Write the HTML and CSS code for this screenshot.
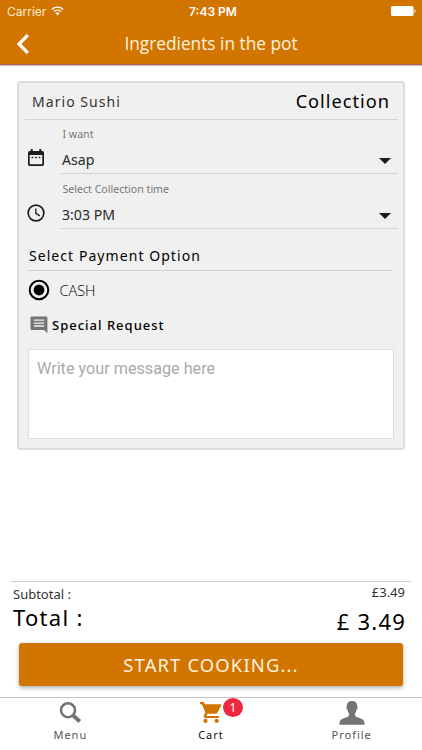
FILE: index.html
```html
<!DOCTYPE html>
<html lang="en">
<head>
<meta charset="utf-8">
<title>Ingredients in the pot</title>
<link rel="stylesheet" href="styles.css">
</head>
<body>
<div class="app">
  <header class="header">
    <div class="status">
      <div class="carrier"><span>Carrier</span>
        <svg class="wifi" width="13" height="10" viewBox="0 0 13 10" fill="none" stroke="#fff" stroke-width="1.4"><path d="M.8 3.4a8.3 8.3 0 0 1 11.4 0M2.8 5.6a5.4 5.4 0 0 1 7.4 0"/><path d="M4.4 7.1a3.2 3.2 0 0 1 4.2 0L6.5 9.4z" fill="#fff" stroke="none"/></svg>
      </div>
      <div class="clock">7:43 PM</div>
      <svg class="battery" width="25" height="10" viewBox="0 0 25 10" fill="#fff"><rect width="22.5" height="10" rx="1.6"/><path d="M23.3 3.2c1.6.4 1.6 3.2 0 3.6z"/></svg>
    </div>
    <div class="navbar">
      <svg class="back" width="14" height="20" viewBox="0 0 14 20" fill="none" stroke="#fff" stroke-width="3.2"><path d="M11.8 1.2 3 10l8.800 8.800"/></svg>
      <h1 class="title">Ingredients in the pot</h1>
    </div>
  </header>

  <main class="content">
    <section class="card">
      <div class="card-head"><span class="shop">Mario Sushi</span><span class="mode">Collection</span></div>
      <div class="field">
        <svg class="field-icon" width="20" height="20" viewBox="0 0 20 20" fill="#1c1c1c"><path d="M16.300 3h-1V1h-2v2H6.700V1h-2v2h-1A1.800 1.800 0 0 0 2 4.800v11.400A1.800 1.800 0 0 0 3.800 18h12.400a1.800 1.800 0 0 0 1.800-1.800V4.800A1.800 1.800 0 0 0 16.300 3zm0 13.300H3.700V7h12.600z"/><path d="M5.500 8.700h1.700v1.500H5.500zm3.600 0h1.700v1.500H9.100zm3.600 0h1.700v1.500h-1.700z"/></svg>
        <div class="select"><span class="label">I want</span><div class="value"><span>Asap</span><i class="caret"></i></div></div>
      </div>
      <div class="field second">
        <svg class="field-icon" width="20" height="20" viewBox="0 0 24 24" fill="none" stroke="#1c1c1c" stroke-width="2"><circle cx="12" cy="12" r="9.4"/><path d="M11.800 6.500v6l4.800 2.900" stroke-width="1.600"/></svg>
        <div class="select"><span class="label">Select Collection time</span><div class="value"><span>3:03 PM</span><i class="caret"></i></div></div>
      </div>
      <h2 class="payment">Select Payment Option</h2>
      <div class="option">
        <svg width="22" height="22" viewBox="0 0 22 22"><circle cx="11" cy="11" r="9.300" fill="none" stroke="#000" stroke-width="2"/><circle cx="11" cy="11" r="5.400"/></svg>
        <span class="cash">CASH</span>
      </div>
      <div class="request">
        <svg width="18" height="18" viewBox="0 0 18 18"><path d="M1.800.5h14.300a1.300 1.300 0 0 1 1.300 1.300v15.400L14 14H1.800A1.300 1.300 0 0 1 .5 12.700V1.800A1.300 1.300 0 0 1 1.800.5z" fill="#757575"/><path d="M3.800 4.200h10.400M3.800 7.100h10.400M3.800 10h10.400" stroke="#f0f0f0" stroke-width="1.300"/></svg>
        <span class="special">Special Request</span>
      </div>
      <textarea class="message" placeholder="Write your message here"></textarea>
    </section>
  </main>

  <section class="summary">
    <div class="totals">
      <div class="names"><div class="subtotal"><span>Subtotal :</span></div><div class="total"><span>Total :</span></div></div>
      <div class="amounts"><div class="sub-amount"><span>£3.49</span></div><div class="total-amount"><span>£ 3.49</span></div></div>
    </div>
    <button class="start"><span>START COOKING...</span></button>
  </section>

  <nav class="tabs">
    <div class="tab">
      <svg class="tab-icon" width="26" height="26" viewBox="0 0 26 26" fill="none" stroke="#757575"><circle cx="11" cy="10.200" r="7" stroke-width="2.600"/><path d="m16.200 15.500 6.600 6" stroke-width="4"/></svg>
      <span class="tab-label">Menu</span>
    </div>
    <div class="tab active">
      <div class="cart">
        <svg class="tab-icon" width="26" height="26" viewBox="0 0 26 26" fill="#d27500"><path d="M2 2h3.900l1 2.200h15.500c.8 0 1.200.7.800 1.400l-3.900 7.100c-.4.700-1 1-1.800 1H9.600l-1 1.800c-.1.300 0 .5.300.5h12v2.100H7.700c-1.800 0-2.500-1.600-1.700-3l1.400-2.500L3.800 4.200H2z"/><circle cx="7.500" cy="20.900" r="2.100"/><circle cx="18.700" cy="20.900" r="2.100"/></svg>
        <span class="badge">1</span>
      </div>
      <span class="tab-label">Cart</span>
    </div>
    <div class="tab">
      <svg class="tab-icon" width="26" height="26" viewBox="0 0 26 26" fill="#757575"><path d="M13 1c3.500 0 5.200 1.900 5.100 5.100.8.300.7 2.700-.3 3.100-.3 1.900-.9 3-1.700 3.900v2.500c.5 1.300 2.100 1.700 4.500 2.500 3.400 1.200 4.900 2.200 5 6.700H.4c.1-4.500 1.600-5.500 5-6.700 2.400-.8 4-1.200 4.500-2.500v-2.500c-.8-.9-1.400-2-1.700-3.900-1-.4-1.100-2.800-.3-3.100C7.800 2.900 9.500 1 13 1z"/></svg>
      <span class="tab-label">Profile</span>
    </div>
  </nav>
</div>
</body>
</html>
```
FILE: styles.css
```css
* { box-sizing: border-box; }
body { margin: 0; background: #fff; color: #222; font-family: "Noto Sans", "Open Sans", sans-serif; }
h1, h2 { margin: 0; font-weight: 400; }
svg { display: block; flex: none; }
.app { width: 422px; height: 750px; display: flex; flex-direction: column; overflow: hidden; }

.header { height: 66px; flex: none; background: #d27500; border-bottom: 1px solid #d6b3b5; box-shadow: inset 0 -1px #a06a5c; color: #fff; }
.status { height: 22px; padding: 0 6px 0 7px; display: grid; grid-template-columns: 1fr auto 1fr; align-items: center; font-family: Inter, sans-serif; font-size: 12px; }
.carrier { display: flex; align-items: center; gap: 5px; color: #ffebcf; }
.clock { font-weight: 600; font-size: 12px; padding-left: 3px; }
.battery { justify-self: end; }
.navbar { height: 43px; padding: 0 16px; display: grid; grid-template-columns: 40px 1fr 40px; align-items: center; }
.title { text-align: center; font: 400 17.300px/24px "Open Sans", sans-serif; color: #fff2df; white-space: nowrap; }

.content { flex: 1; padding: 15px 17px 0; }
.card { height: 369px; background: #f0f0f0; border: 2px solid #ddd; border-radius: 3px; padding: 0 5px 0 6px; }
.card-head { height: 37px; padding: 0 8px 0 7px; display: flex; align-items: center; justify-content: space-between; border-bottom: 1px solid #d4d4d4; }
.shop { font-size: 14px; letter-spacing: 1.050px; color: #333; }
.mode { font-size: 18.200px; letter-spacing: 1px; color: #000; }
.field { height: 54px; display: flex; }
.second { height: 55px; }
.field-icon { margin: 28px 14px 0 1px; }
.second .field-icon { margin-top: 29px; }
.select { flex: 1; border-bottom: 1px solid #d4d4d4; padding: 6px 7px 0 2px; }
.second .select { padding-top: 7px; }
.label { display: block; font-size: 10.600px; line-height: 16px; color: #777; padding-left: .5px; }
.value { display: flex; justify-content: space-between; align-items: center; font-size: 14.100px; line-height: 20px; margin-top: 8px; color: #2a2a2a; }
.caret { border: 6px solid transparent; border-top: 6px solid #1c1c1c; border-bottom: 0; position: relative; top: 1px; }
.payment { height: 42px; margin: 0 5px 0 3px; padding: 17px 0 0 1px; border-bottom: 1px solid #d0d0d0; font-size: 14px; line-height: 20px; letter-spacing: 1.060px; color: #000; }
.option { height: 38px; padding-left: 3px; display: flex; align-items: center; gap: 9px; }
.cash { font: 300 14.500px/20px "Open Sans", sans-serif; color: #000; padding: 1px 0 0 .5px; }
.request { height: 32px; padding-left: 5px; display: flex; align-items: center; gap: 4px; }
.special { font-size: 13px; letter-spacing: 1px; color: #000; font-weight: 500; }
.message { display: block; width: 366px; height: 90px; margin: 8px 0 0 3px; padding: 9px 8px; resize: none; outline: 0; border: 1px solid #ddd; background: #fff; font: 16.200px/20px Roboto, sans-serif; }
.message::placeholder { color: #aaa; opacity: 1; }

.summary { height: 116px; flex: none; padding: 0 11px; }
.totals { height: 62px; padding: 0 6px 0 2px; border-top: 1px solid #ccc; display: flex; justify-content: space-between; }
.subtotal { font-size: 13px; line-height: 24px; color: #333; }
.total { font-size: 22px; line-height: 23px; letter-spacing: 1.300px; color: #000; }
.amounts { text-align: right; }
.sub-amount { font-size: 13px; line-height: 21px; color: #333; }
.total-amount { font-size: 22px; line-height: 36px; letter-spacing: 1.200px; margin-right: -1px; color: #000; }
.start { display: block; width: 384px; height: 43px; margin: 0 0 0 8px; padding: 0; border: 0; border-radius: 3px; background: #d27500; color: #fff2df; box-shadow: 0 2px 4px rgba(0,0,0,.32); font: 18.400px/43px "Noto Sans", sans-serif; letter-spacing: 1.150px; }

.tabs { height: 53px; flex: none; display: grid; grid-template-columns: repeat(3, 1fr); border-top: 1px solid #c4c4c4; }
.tab { display: flex; flex-direction: column; align-items: center; padding-top: 2px; color: #555; }
.active { color: #111; }
.cart { position: relative; }
.badge { position: absolute; left: 25px; top: -2px; width: 20px; height: 19px; border-radius: 50%; background: #ed2840; color: #fff; text-align: center; font: 12px/19px "Noto Sans", sans-serif; }
.tab-label { font-size: 11px; line-height: 16px; margin-top: 1px; letter-spacing: 1px; }
```
